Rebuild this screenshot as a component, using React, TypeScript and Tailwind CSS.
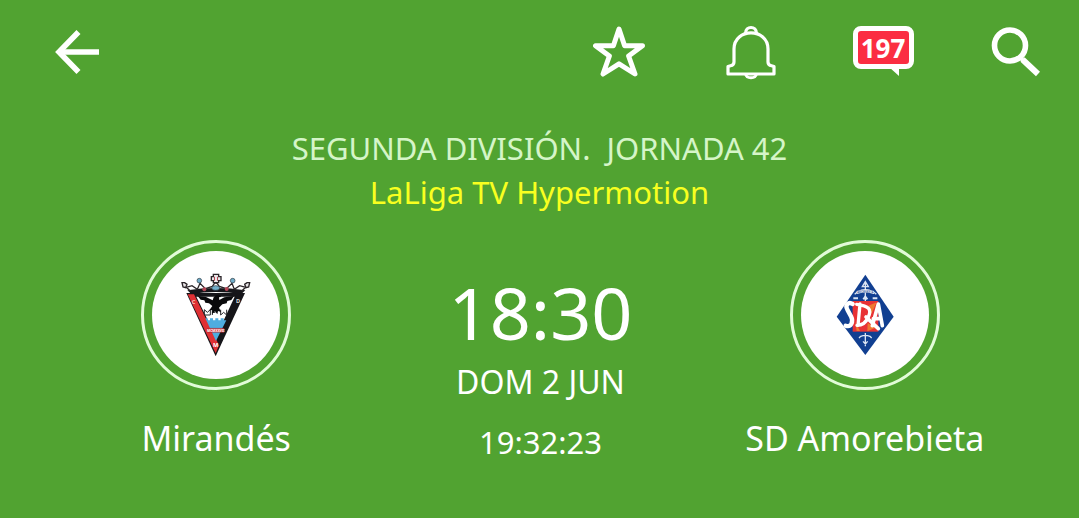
import type { ReactNode } from "react";

const COMMENTS = 197;

function ArrowIcon() {
  return (
    <svg viewBox="0 0 44 44" className="size-11" fill="none" stroke="currentColor" strokeWidth="5.6">
      <path d="M23.500 2 4 22l19.500 20" />
      <path d="M4 22h40" />
    </svg>
  );
}

function StarIcon() {
  return (
    <svg
      viewBox="0 0 52 52"
      className="size-13"
      fill="none"
      stroke="currentColor"
      strokeWidth="5"
      strokeLinejoin="round"
    >
      <path d="M26 3l5.600 16.700H49.500L35.600 30l6.400 18L26 37.800 10 48l6.400-18L2.500 19.700h17.900z" />
    </svg>
  );
}

function BellIcon() {
  return (
    <svg
      viewBox="0 0 52 56"
      className="h-14 w-13"
      fill="none"
      stroke="currentColor"
      strokeWidth="3.2"
      strokeLinejoin="round"
    >
      <path d="M20.500 9.500c0-8 11-8 11 0" />
      <path d="M9 25C9 3.500 43 3.500 43 25v13c0 2.500 1 3.300 3.500 3.800l2.500.7v7.500H3v-7.500l2.500-.7C8 41.300 9 40.500 9 38z" />
      <path d="M20.500 50c1 5 10 5 11 0" strokeWidth="2.800" />
    </svg>
  );
}

function SearchIcon() {
  return (
    <svg viewBox="0 0 50 50" className="size-[50px]" fill="none" stroke="currentColor">
      <circle cx="20" cy="18.500" r="15.500" strokeWidth="5.600" />
      <path d="M30 30l3.500 4" strokeWidth="4" />
      <path d="M32.500 32.500 48 47" strokeWidth="6" />
    </svg>
  );
}

function MirandesCrest() {
  return (
    <svg viewBox="66 60 384 384" className="size-32" role="img" aria-label="Mirandés">
      {/* crown */}
      <path d="M172 178Q257 164 346 178l-12 11Q257 177 184 189z" fill="#16161a" />
      <g fill="#e9e6e8" stroke="#2b2529" strokeWidth="4">
        <path
          d="M181 180l-12-11 17-5 16 11 8-18 16 16 21-7 10-14 11 14 21 7 17-16 7 18 16-11 18 5-12 11"
          fill="none"
        />
        <path d="M209 156v-11M308 156v-11M258 159v-14" />
        <path d="M156 155h8l7 5-4 10-8-2zM359 155h-8l-7 5 4 10 8-2z" />
        <path d="M250 130h16v7h7v12h-7v6h-16v-6h-6v-12h6z" />
      </g>
      <g fill="#70aeca" stroke="#28343c" strokeWidth="2">
        <circle cx="208" cy="149" r="7" />
        <circle cx="308" cy="149" r="7" />
        <ellipse cx="257" cy="171" rx="12" ry="7" />
      </g>
      <g fill="#b44755">
        <circle cx="223" cy="175" r="6" />
        <circle cx="290" cy="174" r="6" />
        <path d="M252 137h3v12h-3zM261 137h3v12h-3z" />
      </g>
      {/* shield */}
      <path d="M169 186h176l-88 190z" fill="#151519" />
      <path d="M173 190h19l75 153-10 24z" fill="#df3034" />
      <path d="M199 197h115l-56 121z" fill="#fff" />
      <path d="M226 262h7v6h7v-6h9v6h7v-6h9v6h7v-6h9v6h8l-31 62z" fill="#4eade0" />
      <g fill="none" stroke="#27272b" strokeWidth="3">
        <path d="M223 236v16h18v-16l-9 8zM247 236v16M247 237h10M247 244h9M272 236v16l9-8 9 8v-16" />
      </g>
      {/* eagle */}
      <path
        d="M258 193c8-4 14 0 15 5l-6 1 1 8 15-8 29-4-8 12-12 3-2 7-13 3-10 10 6 13-9-3-2 10-7-9-9 8 1-12-9 1 9-13-10-8-11-2-3-7-11-2-9-11 25 3 20 10 3-9z"
        fill="#09090b"
      />
      <path d="M233 292h49v12h-49z" fill="#df3539" stroke="#8b252b" />
      <text x="257.500" y="302" fontSize="10" textAnchor="middle" fill="#fff" fontWeight="700">
        MCMXXVII
      </text>
      <g fill="#fff" fontSize="17" textAnchor="middle" fontWeight="700">
        <text x="191" y="218" fill="#f4c9bd">
          C
        </text>
        <text x="324" y="217" fill="#ddd">
          D
        </text>
        <text x="257" y="348">
          M
        </text>
      </g>
    </svg>
  );
}

function AmorebietaCrest() {
  return (
    <svg viewBox="63 60 384 384" className="size-32" role="img" aria-label="SD Amorebieta">
      <path d="M256 131l85 126-85 115-86-115z" fill="#113f91" />
      <path d="M218 210h77v92h-77z" fill="#e83235" />
      <path d="M265 224l25-10-16 35zM226 272l14 28h-10zM263 276l24 14-25 11z" fill="#ee7931" />
      {/* arrows and ribbons */}
      <g fill="none" stroke="#dce5f3" strokeWidth="4">
        <path d="M256 156v54M247 167l9-15 9 15zM224 190l8-7q24-12 49 0l8 7" />
        <path d="M220 202h14M278 202h14M250 205l6-8 6 8" strokeWidth="6" />
        <path d="M256 306v40M249 331l7 8 7-8M237 321l5-5q14-6 28 0l5 5" />
      </g>
      <path d="M230 180q26-10 52 0v9q-26-9-52 0z" fill="#f4f6fa" />
      <text x="256" y="186" fontSize="8" textAnchor="middle" fill="#113f91">
        AMOREBIETA
      </text>
      <g fill="none" stroke="#fff" strokeWidth="13" strokeLinecap="round" strokeLinejoin="round">
        <path d="M218 219c-12-9-24 4-16 17l11 20c9 18-1 34-16 28" />
        <path d="M240 219l-6 64M230 220c37 5 46 14 35 38-7 17-20 25-34 25" strokeWidth="10" />
        <path d="M277 284l18-65 12 65M280 263h22M258 258l37 35" strokeWidth="11" />
      </g>
    </svg>
  );
}

function IconButton({ label, children }: { label: string; children: ReactNode }) {
  return (
    <button type="button" aria-label={label} className="flex size-16 items-center justify-center">
      {children}
    </button>
  );
}

function Team({ name, crest }: { name: string; crest: ReactNode }) {
  return (
    <div className="flex flex-col items-center">
      <div className="flex size-[150px] items-center justify-center rounded-full border-3 border-[#e2fbd8]">
        <div className="flex size-32 items-center justify-center rounded-full bg-white">
          {crest}
        </div>
      </div>
      <h2 className="mt-6 text-[34px] leading-12 whitespace-nowrap">{name}</h2>
    </div>
  );
}

export default function App() {
  return (
    <div className="min-h-screen bg-[#51a331] pb-8 font-['Noto_Sans',sans-serif] text-white">
      <header className="flex items-center justify-between pt-5 pr-8 pl-[45px]">
        <IconButton label="Volver">
          <ArrowIcon />
        </IconButton>
        <nav className="flex items-center gap-17">
          <IconButton label="Favorito">
            <StarIcon />
          </IconButton>
          <IconButton label="Notificaciones">
            <BellIcon />
          </IconButton>
          <button type="button" className="relative flex size-16 items-center justify-center">
            <span className="mb-[9px] flex h-[43px] w-[61px] shrink-0 items-center justify-center rounded-lg border-5 border-white bg-[#fb2d42] text-[26px] leading-8 font-bold">
              {COMMENTS}
            </span>
            <svg viewBox="0 0 10 9" className="absolute right-4 bottom-2 h-[9px] w-[10px]">
              <path d="M0 0h10v9z" fill="#fff" />
            </svg>
          </button>
          <IconButton label="Buscar">
            <SearchIcon />
          </IconButton>
        </nav>
      </header>

      <main>
        <div className="mt-[42px] text-center text-[31px] leading-11">
          <h1 className="whitespace-pre text-[#d5f5c8]">{"SEGUNDA DIVISIÓN.  JORNADA 42"}</h1>
          <p className="text-[#f8ff20]">LaLiga TV Hypermotion</p>
        </div>

        <div className="mt-[26px] grid grid-cols-3 pr-[52px] pl-[54px]">
          <Team name="Mirandés" crest={<MirandesCrest />} />
          <div className="flex flex-col items-center pt-6 whitespace-nowrap">
            <time className="text-[72px] leading-[96px]">18:30</time>
            <p className="text-[32px] leading-11">DOM 2 JUN</p>
            <p className="mt-4 text-[31px] leading-11">19:32:23</p>
          </div>
          <Team name="SD Amorebieta" crest={<AmorebietaCrest />} />
        </div>
      </main>
    </div>
  );
}
